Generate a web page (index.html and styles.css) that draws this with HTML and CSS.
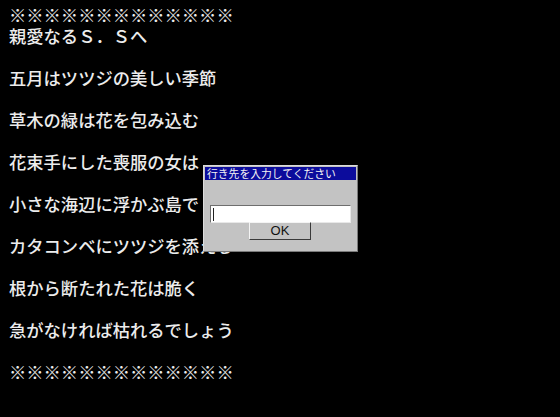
FILE: index.html
```html
<!DOCTYPE html>
<html lang="ja">
<head>
<meta charset="utf-8">
<link rel="stylesheet" href="styles.css">
</head>
<body>
<div class="letter">
  <p class="line">※※※※※※※※※※※※※</p>
  <p class="line">親愛なるＳ．Ｓへ</p>
  <p class="line gap">五月はツツジの美しい季節</p>
  <p class="line gap">草木の緑は花を包み込む</p>
  <p class="line gap">花束手にした喪服の女は</p>
  <p class="line gap">小さな海辺に浮かぶ島で</p>
  <p class="line gap">カタコンベにツツジを添える</p>
  <p class="line gap">根から断たれた花は脆く</p>
  <p class="line gap">急がなければ枯れるでしょう</p>
  <p class="line gap">※※※※※※※※※※※※※</p>
</div>
<div class="dialog">
  <div class="title">行き先を入力してください</div>
  <div class="body">
    <div class="input"><span class="caret"></span></div>
    <div class="button">OK</div>
  </div>
</div>
</body>
</html>
```
FILE: styles.css
```css
html, body {
  margin: 0;
  padding: 0;
  background: #000;
  height: 100%;
}
.letter {
  padding: 4px 0 0 9px;
  font-family: "Noto Sans CJK JP", "DejaVu Sans", sans-serif;
  font-size: 17.3px;
  font-weight: 500;
  line-height: 21px;
  color: #ececec;
}
.line {
  margin: 0;
  white-space: nowrap;
}
.gap {
  margin-top: 21px;
}
.dialog {
  position: absolute;
  left: 203px;
  top: 165px;
  width: 155px;
  height: 87px;
  box-sizing: border-box;
  background: #c3c3c3;
  border-top: 1px solid #dcdcdc;
  border-left: 1px solid #dcdcdc;
  border-right: 1px solid #7a7a7a;
  border-bottom: 1px solid #7a7a7a;
  padding: 1px 1px 0 1px;
}
.title {
  height: 13px;
  background: #0c0c9c;
  color: #f4f4f4;
  font-family: "Noto Sans CJK JP", "DejaVu Sans", sans-serif;
  font-size: 10.8px;
  line-height: 13px;
  padding-left: 2px;
  white-space: nowrap;
}
.body {
  display: flex;
  flex-direction: column;
  align-items: center;
  padding-top: 25px;
}
.input {
  width: 141px;
  height: 18px;
  box-sizing: border-box;
  background: #fff;
  border-top: 1px solid #6e6e6e;
  border-left: 1px solid #6e6e6e;
  border-right: 1px solid #e8e8e8;
  border-bottom: 1px solid #e8e8e8;
  display: flex;
  align-items: center;
  padding-left: 2px;
  margin-left: -1px;
}
.caret {
  width: 1px;
  height: 13px;
  background: #222;
}
.button {
  margin-top: -1px;
  width: 62px;
  height: 18px;
  box-sizing: border-box;
  background: #c3c3c3;
  border-top: 1px solid #f4f4f4;
  border-left: 1px solid #f4f4f4;
  border-right: 1px solid #3a3a3a;
  border-bottom: 1px solid #3a3a3a;
  font-family: "Liberation Sans", Arial, sans-serif;
  font-size: 13px;
  line-height: 16px;
  text-align: center;
  color: #111;
  margin-left: -1px;
}
```
